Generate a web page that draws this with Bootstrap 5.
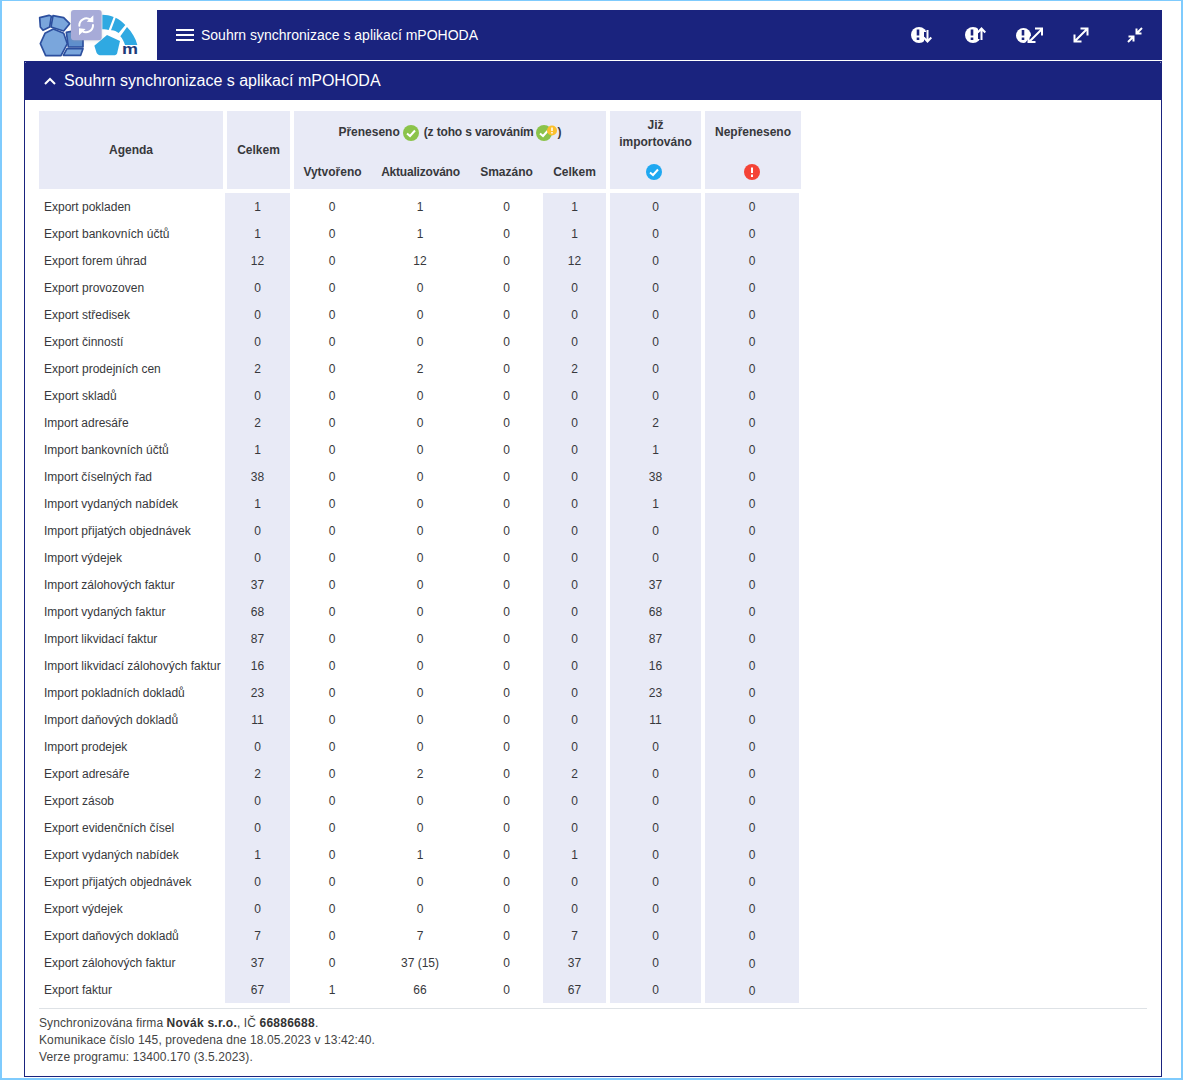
<!DOCTYPE html>
<html lang="cs">
<head>
<meta charset="utf-8">
<title>Souhrn synchronizace</title>
<link href="https://cdn.jsdelivr.net/npm/bootstrap@5.3.0/dist/css/bootstrap.min.css" rel="stylesheet">
<style>
html,body{height:1080px;overflow:hidden}
body{background:#fff;color:#37383c;font-family:"Liberation Sans",Arial,sans-serif;font-size:12px;border:solid #7fcbfd;border-width:1px 2px 2px 2px;padding:9px 19px 0 22px}
.top-bar{height:50px;flex-wrap:nowrap}
.logo-box{width:133px;height:50px;flex:none}
.logo-box svg{display:block}
.nav-fill{background:#1a237e;height:50px;padding:0 0 0 19px;color:#fff;font-size:14px}
.burger{width:18px;height:14px;margin-right:7px}
.nav-ic{width:54px;height:50px;background:none;border:0;padding:0;display:flex;align-items:center;justify-content:center}
.nudge svg{margin-left:4px}
.sum-card{margin-top:1px;border:1px solid #1a237e;border-radius:0;height:1016px;background:#fff}
.sum-head{background:#1a237e;color:#fff;font-size:16px;height:39px;padding:0 0 0 20px;border-radius:0;border:0;margin:-1px -1px 0}
.sum-head svg{margin-right:8px}
.sum-body{padding:11px 14px 0}
.hdr{gap:4px;height:78px;font-weight:700;line-height:17px}
.hdr-cell{background:#e8eaf6;text-align:center}
.w-agenda{width:184px}.w-cel{width:63px}.w-grp{width:312px}.w-jiz{width:91px}.w-nep{width:96px}
.grp-top{height:43px}
.grp-top svg{flex:none}
.ic-first{margin:1px 5px 0 3px}
.ic-warn{margin:1px 0 0 2px}
.tight-a{letter-spacing:-.15px}
.sub-col{height:36px;white-space:nowrap;display:flex;align-items:center;justify-content:center}
.sc-a{width:77px}.sc-b{width:99px;letter-spacing:-.2px}.sc-c{width:73px}.sc-d{width:63px}
.two-line{height:43px;padding-top:6px}
.one-line{height:43px}
.stat-icon{height:35px}
.ic-jiz{margin-right:3px}
.ic-nep{margin-right:2px}
.data-tbl{table-layout:fixed;border-collapse:separate;border-spacing:0;width:760px;margin-top:4px}
.data-tbl td{height:27px;padding:0;text-align:center;vertical-align:middle;line-height:14px;white-space:nowrap}
.data-tbl td:first-child{text-align:left;padding-left:5px}
.data-tbl td:nth-child(3){padding-left:4px}
.data-tbl td.tint{background:#e8eaf6;background-clip:padding-box}
.data-tbl td.gapr{border-right:4px solid #fff}
.data-tbl td.lower{padding-top:2px}
.foot-rule{margin:5px 0 6px;border-top:1px solid #dee2e6;opacity:1}
.foot-txt{line-height:17px;color:#444;letter-spacing:.1px}
.foot-txt b{color:#333;letter-spacing:.25px}
</style>
</head>
<body>
<div class="d-flex top-bar">
  <div class="logo-box">
    <svg width="133" height="50" viewBox="-3 15 399 150">
      <defs><filter id="halo" x="-30%" y="-30%" width="160%" height="160%"><feGaussianBlur stdDeviation="5"/></filter></defs>
      <g fill="#7aa6dc" stroke="#2c4f9e" stroke-width="5" stroke-linejoin="round">
        <path d="M124 82 174 72 174 126 130 126Z" fill="#5f8fcc"/>
        <path d="M44 38 72 31 79 34 74 66 54 76 46 66Z"/>
        <path d="M84 32 116 38 134 56 116 78 78 66Z"/>
        <path d="M46 116 60 85 85 72 116 85 127 116 108 152 62 152Z"/>
        <path d="M126 131 174 131 167 151 115 151Z"/>
      </g>
      <g fill="#2fa9e2">
        <path d="M232 29C243 29 255 31 266 36L251 75C245 73 238 72 232 73Z"/>
        <path d="M272 38C284 44 293 51 301 60L281 84C274 79 266 75 258 76Z"/>
        <path d="M306 66C321 82 332 100 337 120L300 120C297 110 292 101 286 94Z"/>
        <path d="M208 122 246 90 285 108 276 146C272 151 268 151 262 151L228 151C222 151 218 148 215 144Z"/>
      </g>
      <text x="291" y="147" font-family="'Liberation Sans',sans-serif" font-weight="700" font-size="46" textLength="48" lengthAdjust="spacingAndGlyphs" fill="#1f3b7a">m</text>
      <rect x="138" y="16" width="92" height="91" rx="9" fill="#999" opacity=".3" filter="url(#halo)"/>
      <rect x="138" y="15" width="92" height="91" rx="9" fill="#a7abd8"/>
      <g fill="none" stroke="#fff" stroke-width="6" stroke-linecap="round">
        <path d="M163 62A21 21 0 0 1 196 44"/>
        <path d="M204 60A21 21 0 0 1 171 78"/>
      </g>
      <path d="M205 31 205 52 185 50Z M162 91 162 70 182 72Z" fill="#fff"/>
    </svg>
  </div>
  <nav class="navbar nav-fill flex-grow-1 d-flex flex-nowrap align-items-center justify-content-between">
    <div class="d-flex align-items-center">
      <svg class="burger" viewBox="0 0 18 14"><path d="M0 2H18M0 7H18M0 12H18" stroke="#fff" stroke-width="2"/></svg>
      <span>Souhrn synchronizace s aplikací mPOHODA</span>
    </div>
    <div class="d-flex">
      <button class="nav-ic nudge" type="button" aria-label="Chyby stahování">
        <svg width="21" height="20" viewBox="0 0 21 20"><circle cx="8" cy="10" r="8" fill="#fff"/><path d="M7 4.500V10.500" stroke="#1a237e" stroke-width="2.600"/><path d="M7 12.500V15" stroke="#1a237e" stroke-width="2.600"/><path d="M16 7V20" stroke="#1a237e" stroke-width="6"/><path d="M16.500 5V16M12.700 12.500 16.500 16.500 20.300 12.500" fill="none" stroke="#fff" stroke-width="2"/></svg>
      </button>
      <button class="nav-ic nudge" type="button" aria-label="Chyby odesílání">
        <svg width="21" height="20" viewBox="0 0 21 20"><circle cx="8" cy="10" r="8" fill="#fff"/><path d="M7 4.500V10.500" stroke="#1a237e" stroke-width="2.600"/><path d="M7 12.500V15" stroke="#1a237e" stroke-width="2.600"/><path d="M16 1V14" stroke="#1a237e" stroke-width="6"/><path d="M16.500 15V3.500M12.700 7.500 16.500 3.500 20.300 7.500" fill="none" stroke="#fff" stroke-width="2"/></svg>
      </button>
      <button class="nav-ic nudge" type="button" aria-label="Chyby rozbalit">
        <svg width="27" height="20" viewBox="0 0 27 20"><circle cx="7.500" cy="10.500" r="7.500" fill="#fff"/><path d="M7 5V10.500" stroke="#1a237e" stroke-width="2.600"/><path d="M7 12.500V15" stroke="#1a237e" stroke-width="2.600"/><path d="M12 20 25 4" stroke="#1a237e" stroke-width="7"/><path d="M13.500 16.500 25.500 4.500M19 3.500H26V10.500M12.500 10V17H19.500" fill="none" stroke="#fff" stroke-width="2"/></svg>
      </button>
      <button class="nav-ic" type="button" aria-label="Rozbalit vše">
        <svg width="16" height="16" viewBox="0 0 16 16"><path d="M2.500 13.500 13.500 2.500M7.500 1.500H14.500V8.500M1.500 7.500V14.500H8.500" fill="none" stroke="#fff" stroke-width="2"/></svg>
      </button>
      <button class="nav-ic" type="button" aria-label="Sbalit vše">
        <svg width="16" height="16" viewBox="0 0 16 16"><path d="M1 15 6 10M1.500 9.500H6.500V14.500M15 1 10 6M9.500 1.500V6.500H14.500" fill="none" stroke="#fff" stroke-width="2"/></svg>
      </button>
    </div>
  </nav>
</div>

<section class="card sum-card">
  <div class="card-header d-flex align-items-center sum-head">
    <svg width="12" height="8" viewBox="0 0 12 8"><path d="M1 7 6 2 11 7" fill="none" stroke="#fff" stroke-width="2"/></svg>
    <span>Souhrn synchronizace s aplikací mPOHODA</span>
  </div>
  <div class="sum-body">
    <div class="d-flex hdr">
      <div class="hdr-cell w-agenda d-flex align-items-center justify-content-center">Agenda</div>
      <div class="hdr-cell w-cel d-flex align-items-center justify-content-center">Celkem</div>
      <div class="hdr-cell w-grp">
        <div class="grp-top d-flex align-items-center justify-content-center">
          <span>Přeneseno</span><svg class="ic-first" width="16" height="16" viewBox="0 0 16 16"><circle cx="8" cy="8" r="8" fill="#8bc34a"/><path d="M4 8.500 7 11 12 5.500" fill="none" stroke="#fff" stroke-width="2"/></svg><span class="tight-a">(z toho s varováním</span><svg class="ic-warn" width="22" height="16" viewBox="0 0 22 16"><circle cx="8" cy="8" r="8" fill="#8bc34a"/><path d="M4 8.500 7 11 12 5.500" fill="none" stroke="#fff" stroke-width="2"/><circle cx="16" cy="5.500" r="5" fill="#fbc02d"/><path d="M16 2.500V6M16 7V8.500" stroke="#fff" stroke-width="1.500"/></svg><span>)</span>
        </div>
        <div class="d-flex">
          <div class="sub-col sc-a">Vytvořeno</div>
          <div class="sub-col sc-b">Aktualizováno</div>
          <div class="sub-col sc-c">Smazáno</div>
          <div class="sub-col sc-d">Celkem</div>
        </div>
      </div>
      <div class="hdr-cell w-jiz">
        <div class="two-line">Již<br>importováno</div>
        <div class="stat-icon d-flex align-items-center justify-content-center"><svg class="ic-jiz" width="16" height="16" viewBox="0 0 16 16"><circle cx="8" cy="8" r="8" fill="#1fa8f1"/><path d="M4 8.500 7 11 12 5.500" fill="none" stroke="#fff" stroke-width="2"/></svg></div>
      </div>
      <div class="hdr-cell w-nep">
        <div class="one-line d-flex align-items-center justify-content-center">Nepřeneseno</div>
        <div class="stat-icon d-flex align-items-center justify-content-center"><svg class="ic-nep" width="16" height="16" viewBox="0 0 16 16"><circle cx="8" cy="8" r="8" fill="#f44336"/><path d="M8 3.500V9M8 10.500V13" stroke="#fff" stroke-width="2"/></svg></div>
      </div>
    </div>
    <table class="data-tbl">
      <colgroup><col style="width:186px"><col style="width:65px"><col style="width:80px"><col style="width:100px"><col style="width:73px"><col style="width:67px"><col style="width:95px"><col style="width:94px"></colgroup>
      <tbody>
<tr><td>Export pokladen</td><td class="tint">1</td><td>0</td><td>1</td><td>0</td><td class="tint gapr">1</td><td class="tint gapr">0</td><td class="tint">0</td></tr>
<tr><td>Export bankovních účtů</td><td class="tint">1</td><td>0</td><td>1</td><td>0</td><td class="tint gapr">1</td><td class="tint gapr">0</td><td class="tint">0</td></tr>
<tr><td>Export forem úhrad</td><td class="tint">12</td><td>0</td><td>12</td><td>0</td><td class="tint gapr">12</td><td class="tint gapr">0</td><td class="tint">0</td></tr>
<tr><td>Export provozoven</td><td class="tint">0</td><td>0</td><td>0</td><td>0</td><td class="tint gapr">0</td><td class="tint gapr">0</td><td class="tint">0</td></tr>
<tr><td>Export středisek</td><td class="tint">0</td><td>0</td><td>0</td><td>0</td><td class="tint gapr">0</td><td class="tint gapr">0</td><td class="tint">0</td></tr>
<tr><td>Export činností</td><td class="tint">0</td><td>0</td><td>0</td><td>0</td><td class="tint gapr">0</td><td class="tint gapr">0</td><td class="tint">0</td></tr>
<tr><td>Export prodejních cen</td><td class="tint">2</td><td>0</td><td>2</td><td>0</td><td class="tint gapr">2</td><td class="tint gapr">0</td><td class="tint">0</td></tr>
<tr><td>Export skladů</td><td class="tint">0</td><td>0</td><td>0</td><td>0</td><td class="tint gapr">0</td><td class="tint gapr">0</td><td class="tint">0</td></tr>
<tr><td>Import adresáře</td><td class="tint">2</td><td>0</td><td>0</td><td>0</td><td class="tint gapr">0</td><td class="tint gapr">2</td><td class="tint">0</td></tr>
<tr><td>Import bankovních účtů</td><td class="tint">1</td><td>0</td><td>0</td><td>0</td><td class="tint gapr">0</td><td class="tint gapr">1</td><td class="tint">0</td></tr>
<tr><td>Import číselných řad</td><td class="tint">38</td><td>0</td><td>0</td><td>0</td><td class="tint gapr">0</td><td class="tint gapr">38</td><td class="tint">0</td></tr>
<tr><td>Import vydaných nabídek</td><td class="tint">1</td><td>0</td><td>0</td><td>0</td><td class="tint gapr">0</td><td class="tint gapr">1</td><td class="tint">0</td></tr>
<tr><td>Import přijatých objednávek</td><td class="tint">0</td><td>0</td><td>0</td><td>0</td><td class="tint gapr">0</td><td class="tint gapr">0</td><td class="tint">0</td></tr>
<tr><td>Import výdejek</td><td class="tint">0</td><td>0</td><td>0</td><td>0</td><td class="tint gapr">0</td><td class="tint gapr">0</td><td class="tint">0</td></tr>
<tr><td>Import zálohových faktur</td><td class="tint">37</td><td>0</td><td>0</td><td>0</td><td class="tint gapr">0</td><td class="tint gapr">37</td><td class="tint">0</td></tr>
<tr><td>Import vydaných faktur</td><td class="tint">68</td><td>0</td><td>0</td><td>0</td><td class="tint gapr">0</td><td class="tint gapr">68</td><td class="tint">0</td></tr>
<tr><td>Import likvidací faktur</td><td class="tint">87</td><td>0</td><td>0</td><td>0</td><td class="tint gapr">0</td><td class="tint gapr">87</td><td class="tint">0</td></tr>
<tr><td>Import likvidací zálohových faktur</td><td class="tint">16</td><td>0</td><td>0</td><td>0</td><td class="tint gapr">0</td><td class="tint gapr">16</td><td class="tint">0</td></tr>
<tr><td>Import pokladních dokladů</td><td class="tint">23</td><td>0</td><td>0</td><td>0</td><td class="tint gapr">0</td><td class="tint gapr">23</td><td class="tint">0</td></tr>
<tr><td>Import daňových dokladů</td><td class="tint">11</td><td>0</td><td>0</td><td>0</td><td class="tint gapr">0</td><td class="tint gapr">11</td><td class="tint">0</td></tr>
<tr><td>Import prodejek</td><td class="tint">0</td><td>0</td><td>0</td><td>0</td><td class="tint gapr">0</td><td class="tint gapr">0</td><td class="tint">0</td></tr>
<tr><td>Export adresáře</td><td class="tint">2</td><td>0</td><td>2</td><td>0</td><td class="tint gapr">2</td><td class="tint gapr">0</td><td class="tint">0</td></tr>
<tr><td>Export zásob</td><td class="tint">0</td><td>0</td><td>0</td><td>0</td><td class="tint gapr">0</td><td class="tint gapr">0</td><td class="tint">0</td></tr>
<tr><td>Export evidenčních čísel</td><td class="tint">0</td><td>0</td><td>0</td><td>0</td><td class="tint gapr">0</td><td class="tint gapr">0</td><td class="tint">0</td></tr>
<tr><td>Export vydaných nabídek</td><td class="tint">1</td><td>0</td><td>1</td><td>0</td><td class="tint gapr">1</td><td class="tint gapr">0</td><td class="tint">0</td></tr>
<tr><td>Export přijatých objednávek</td><td class="tint">0</td><td>0</td><td>0</td><td>0</td><td class="tint gapr">0</td><td class="tint gapr">0</td><td class="tint">0</td></tr>
<tr><td>Export výdejek</td><td class="tint">0</td><td>0</td><td>0</td><td>0</td><td class="tint gapr">0</td><td class="tint gapr">0</td><td class="tint">0</td></tr>
<tr><td>Export daňových dokladů</td><td class="tint">7</td><td>0</td><td>7</td><td>0</td><td class="tint gapr">7</td><td class="tint gapr">0</td><td class="tint">0</td></tr>
<tr><td>Export zálohových faktur</td><td class="tint">37</td><td>0</td><td>37 (15)</td><td>0</td><td class="tint gapr">37</td><td class="tint gapr">0</td><td class="tint lower">0</td></tr>
<tr><td>Export faktur</td><td class="tint">67</td><td>1</td><td>66</td><td>0</td><td class="tint gapr">67</td><td class="tint gapr">0</td><td class="tint lower">0</td></tr>
      </tbody>
    </table>
    <hr class="foot-rule">
    <div class="foot-txt">
      <div>Synchronizována firma <b>Novák s.r.o.</b>, IČ <b>66886688</b>.</div>
      <div>Komunikace číslo 145, provedena dne 18.05.2023 v 13:42:40.</div>
      <div>Verze programu: 13400.170 (3.5.2023).</div>
    </div>
  </div>
</section>
</body>
</html>
